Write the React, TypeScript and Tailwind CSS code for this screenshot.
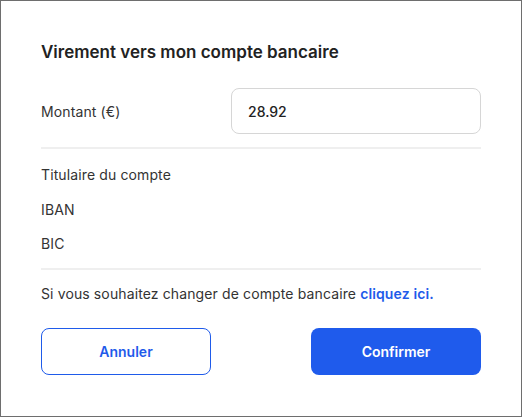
import React from "react";

export default function App() {
  return (
    <div className="w-[522px] h-[417px] bg-[#6e6e6e] pt-[1px] pl-[1px] overflow-hidden" style={{ fontFamily: "Inter, 'Noto Sans', sans-serif" }}>
      <div className="w-[520px] h-[415px] bg-white px-10 pt-[39px] flex flex-col">
        <h1 className="text-[17px] leading-6 font-semibold text-[#222222]">
          Virement vers mon compte bancaire
        </h1>
        <div className="mt-6 flex items-center justify-between h-[46px]">
          <span className="text-[14px] text-[#333333] tracking-[0.12px]">Montant (€)</span>
          <div className="w-[250px] h-[46px] rounded-[8px] border border-[#d6d6d6] flex items-center px-4">
            <span className="text-[14px] font-medium text-[#222222]">28.92</span>
          </div>
        </div>
        <div className="mt-[13px] h-[2px] bg-[#efefef]" />
        <div className="mt-[15px] h-5 flex items-center text-[14px] text-[#333333] tracking-[0.12px]">Titulaire du compte</div>
        <div className="mt-[15px] h-5 flex items-center text-[14px] text-[#333333] tracking-[0.12px]">IBAN</div>
        <div className="mt-[14px] h-5 flex items-center text-[14px] text-[#333333] tracking-[0.12px]">BIC</div>
        <div className="mt-[15px] h-[2px] bg-[#efefef]" />
        <div className="mt-[13px] h-5 flex items-center text-[14px] text-[#333333] tracking-[0.12px]">
          <span>
            Si vous souhaitez changer de compte bancaire{" "}
            <span className="text-[#1f5bea] font-semibold">cliquez ici.</span>
          </span>
        </div>
        <div className="mt-[25px] flex justify-between">
          <button className="w-[170px] h-[47px] rounded-[8px] border border-[#1f5bea] text-[#1f5bea] text-[14px] font-semibold bg-white">
            Annuler
          </button>
          <button className="w-[170px] h-[47px] rounded-[8px] bg-[#1f5bec] text-white text-[14px] font-semibold">
            Confirmer
          </button>
        </div>
      </div>
    </div>
  );
}
